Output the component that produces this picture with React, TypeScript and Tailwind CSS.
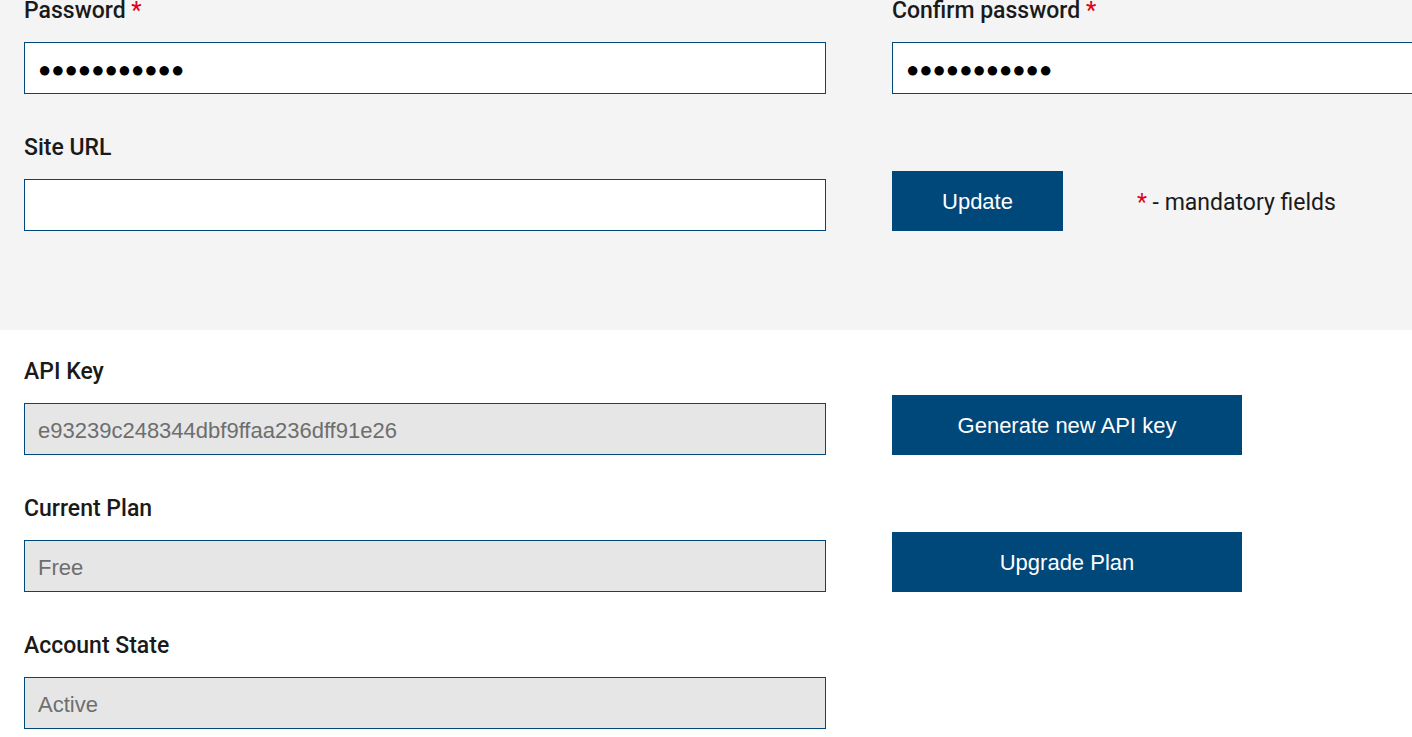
import React from "react";

const labelCls =
  "block font-['Roboto',sans-serif] font-medium text-[23px] leading-[22px] text-[#1a1a1a] mb-[20px] whitespace-nowrap";
const inputCls =
  "block w-[802px] h-[52px] border border-[#00477a] pl-[13px] pr-3 pt-[3px] font-['Liberation_Sans',Arial,sans-serif] text-[22px] outline-none";
const buttonCls =
  "h-[60px] bg-[#00477a] text-white font-['Liberation_Sans',Arial,sans-serif] text-[22px] flex items-center justify-center";

const DOTS = "\u25CF".repeat(11);

function Required() {
  return <span className="text-[#e2001a]"> *</span>;
}

interface FieldProps {
  label: string;
  required?: boolean;
  value: string;
  disabled?: boolean;
}

function Field({ label, required, value, disabled }: FieldProps) {
  return (
    <div>
      <label className={labelCls}>
        {label}
        {required && <Required />}
      </label>
      <input
        type="text"
        readOnly
        value={value}
        className={
          inputCls +
          (disabled ? " bg-[#e6e6e6] text-[#6e6e6e]" : " bg-white text-black")
        }
      />
    </div>
  );
}

export default function App() {
  return (
    <div className="w-[1412px] h-[737px] overflow-hidden bg-white">
      <section className="bg-[#f4f4f4] px-6 pb-[99px]">
        <div className="grid grid-cols-[802px_802px] gap-x-[66px] gap-y-[43px]">
          <Field label="Password" required value={DOTS} />
          <Field label="Confirm password" required value={DOTS} />
          <Field label="Site URL" value="" />
          <div className="flex items-end">
            <button className={buttonCls + " w-[171px]"}>Update</button>
            <span className="ml-[74px] mb-[14px] font-['Roboto',sans-serif] text-[23px] leading-[28px] text-[#1a1a1a]">
              <span className="text-[#e2001a]">*</span> - mandatory fields
            </span>
          </div>
        </div>
      </section>
      <section className="px-6 pt-[31px]">
        <div className="grid grid-cols-[802px_802px] gap-x-[66px] gap-y-[43px]">
          <Field label="API Key" value="e93239c248344dbf9ffaa236dff91e26" disabled />
          <div className="flex items-end">
            <button className={buttonCls + " w-[350px]"}>Generate new API key</button>
          </div>
          <Field label="Current Plan" value="Free" disabled />
          <div className="flex items-end">
            <button className={buttonCls + " w-[350px]"}>Upgrade Plan</button>
          </div>
          <Field label="Account State" value="Active" disabled />
        </div>
      </section>
    </div>
  );
}
